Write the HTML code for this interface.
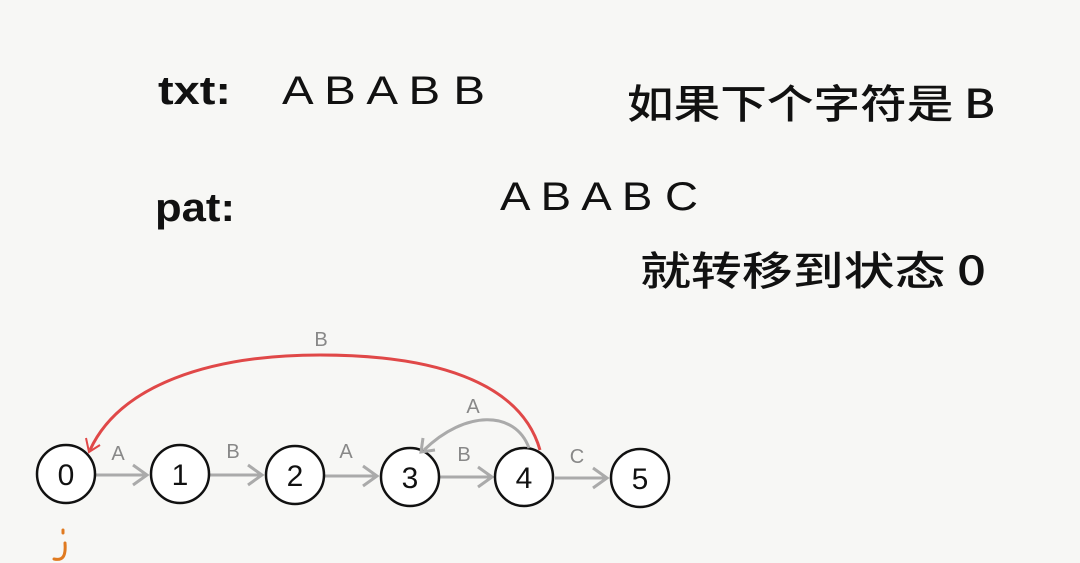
<!DOCTYPE html>
<html><head><meta charset="utf-8"><style>
html,body{margin:0;padding:0;background:#f7f7f5;}
svg{display:block;}
</style></head><body>
<svg width="1080" height="563" viewBox="0 0 1080 563" xmlns="http://www.w3.org/2000/svg">
<rect width="1080" height="563" fill="#f7f7f5"/>
<g font-family="'Liberation Sans','Noto Sans CJK SC',sans-serif" fill="#111">
<text x="158" y="104" font-size="40" font-weight="bold" textLength="73" lengthAdjust="spacingAndGlyphs">txt:</text>
<text x="282" y="104" font-size="40" textLength="203" lengthAdjust="spacingAndGlyphs">A B A B B</text>
<text x="155" y="221" font-size="40" font-weight="bold" textLength="80" lengthAdjust="spacingAndGlyphs">pat:</text>
<text x="500" y="210" font-size="40" textLength="198" lengthAdjust="spacingAndGlyphs">A B A B C</text>
<text x="627" y="118" font-size="40" font-weight="500" font-family="'Noto Sans CJK SC',sans-serif" textLength="368" lengthAdjust="spacingAndGlyphs">如果下个字符是 B</text>
<text x="640" y="285" font-size="40" font-weight="500" font-family="'Noto Sans CJK SC',sans-serif" textLength="346" lengthAdjust="spacingAndGlyphs">就转移到状态 0</text>
</g>
<g stroke="#aaa" stroke-width="3" fill="none">
<path d="M96 475 H145 M133 465 L147 475 L133 485"/>
<path d="M210 475 H260 M248 465 L262 475 L248 485"/>
<path d="M325 476 H375 M363 466 L377 476 L363 486"/>
<path d="M440 477 H490 M478 467 L492 477 L478 487"/>
<path d="M555 478 H605 M593 468 L607 478 L593 488"/>
</g>
<path d="M540 450 C520 380 430 355 320 355 C210 355 120 385 90 450" stroke="#e04848" stroke-width="3" fill="none"/>
<path d="M86 438 L89 452 L100 445" stroke="#e04848" stroke-width="2" fill="none"/>
<g fill="#fff" stroke="#111" stroke-width="2.5">
<circle cx="66" cy="474" r="29"/><circle cx="180" cy="474" r="29"/><circle cx="295" cy="475" r="29"/><circle cx="410" cy="477" r="29"/><circle cx="524" cy="477" r="29"/><circle cx="640" cy="478" r="29"/>
</g>
<path d="M529 448 C515 410 465 410 424 450 M423 438 L421 452 L435 450" stroke="#aaa" stroke-width="3" fill="none"/>
<g font-family="'Liberation Sans',sans-serif" font-size="30" fill="#111" text-anchor="middle">
<text x="66" y="485">0</text><text x="180" y="485">1</text><text x="295" y="486">2</text><text x="410" y="488">3</text><text x="524" y="488">4</text><text x="640" y="489">5</text>
</g>
<g font-family="'Liberation Sans',sans-serif" font-size="20" fill="#888" text-anchor="middle">
<text x="118" y="460">A</text><text x="233" y="458">B</text><text x="346" y="458">A</text><text x="464" y="461">B</text><text x="577" y="463">C</text><text x="473" y="413">A</text><text x="321" y="346">B</text>
</g>
<path d="M63 530 L63 533 M65 543 C66 556 63 561 54 559" stroke="#e07a20" stroke-width="3" fill="none" stroke-linecap="round"/>
</svg>
</body></html>
